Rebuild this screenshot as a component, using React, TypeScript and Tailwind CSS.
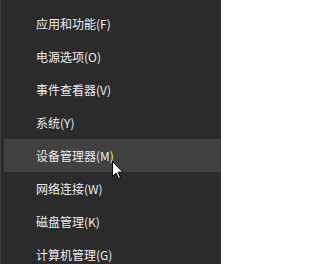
import React from "react";

const items = [
  "应用和功能(F)",
  "电源选项(O)",
  "事件查看器(V)",
  "系统(Y)",
  "设备管理器(M)",
  "网络连接(W)",
  "磁盘管理(K)",
  "计算机管理(G)",
];

export default function App() {
  return (
    <div className="relative w-[221px] h-[264px] overflow-hidden bg-[#2b2b2b] border-l border-[#3c3c3c] pt-[7px] pl-[3px]" style={{ fontFamily: '"Noto Sans CJK SC", "Noto Sans", sans-serif' }}>
      <div className="flex flex-col">
        {items.map((t, i) => (
          <div
            key={t}
            className={`h-[33px] flex items-center pl-[32px] text-[12px] leading-none text-[#ededed] ${i === 4 ? "bg-[#414141]" : ""}`}
          >
            {t}
          </div>
        ))}
      </div>
      <svg className="absolute left-[111px] top-[161px]" width="13" height="19" viewBox="0 0 13 19">
        <path d="M0.5 0.5 L0.5 15.5 L4 12 L6.5 17.5 L8.5 16.7 L6 11.2 L10.8 11.2 Z" fill="#ffffff" stroke="#000000" strokeWidth="1" strokeLinejoin="miter" />
      </svg>
    </div>
  );
}
